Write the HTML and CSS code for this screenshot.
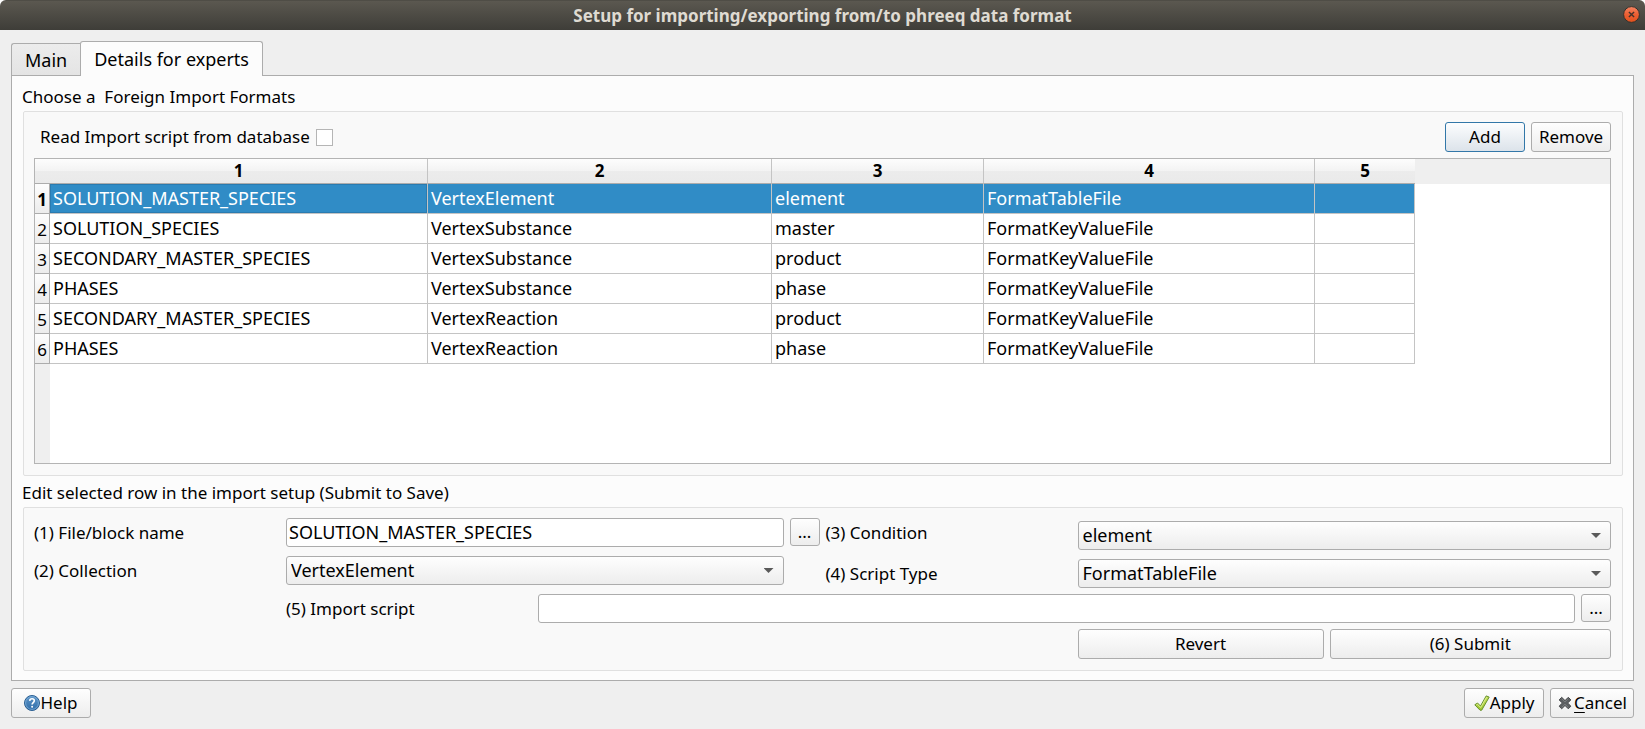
FILE: index.html
```html
<!DOCTYPE html>
<html lang="en">
<head>
<meta charset="utf-8">
<meta name="viewport" content="width=device-width, initial-scale=1">
<title>Setup for importing/exporting from/to phreeq data format</title>
<link rel="stylesheet" href="styles.css">
</head>
<body>
<div class="window">
  <header class="titlebar">
    <h1 class="title">Setup for importing/exporting from/to phreeq data format</h1>
    <button class="close" type="button" aria-label="Close">
      <svg viewBox="0 0 17 17" width="17" height="17" aria-hidden="true">
        <defs><linearGradient id="orange" x1="0" y1="0" x2="0" y2="1"><stop offset="0" stop-color="#f58563"/><stop offset=".5" stop-color="#ec5f33"/><stop offset="1" stop-color="#e2511c"/></linearGradient></defs>
        <circle cx="8.5" cy="8.5" r="7.9" fill="url(#orange)" stroke="#33322d"/>
        <path d="M5.9 5.9l5.2 5.2M11.1 5.9l-5.2 5.2" stroke="#45322a" stroke-width="1.4"/>
      </svg>
    </button>
  </header>

  <main class="content">
    <div class="tabs" role="tablist">
      <button class="tab" type="button" role="tab" aria-selected="false">Main</button>
      <button class="tab tab-active" type="button" role="tab" aria-selected="true">Details for experts</button>
    </div>

    <section class="panel" role="tabpanel">
      <h2 class="group-title">Choose a&nbsp; Foreign Import Formats</h2>
      <div class="group group-formats">
        <div class="toolbar">
          <label class="check">Read Import script from database <input class="checkbox" type="checkbox"></label>
          <button class="button button-default" type="button">Add</button>
          <button class="button" type="button">Remove</button>
        </div>
        <div class="table-view">
          <table class="formats">
            <colgroup><col class="col-index"><col class="col-name"><col class="col-collection"><col class="col-condition"><col class="col-type"><col class="col-script"></colgroup>
            <thead>
              <tr><td class="corner"></td><th scope="col">1</th><th scope="col">2</th><th scope="col">3</th><th scope="col">4</th><th scope="col">5</th></tr>
            </thead>
            <tbody>
              <tr class="selected"><th scope="row">1</th><td>SOLUTION_MASTER_SPECIES</td><td>VertexElement</td><td>element</td><td>FormatTableFile</td><td></td></tr>
              <tr><th scope="row">2</th><td>SOLUTION_SPECIES</td><td>VertexSubstance</td><td>master</td><td>FormatKeyValueFile</td><td></td></tr>
              <tr><th scope="row">3</th><td>SECONDARY_MASTER_SPECIES</td><td>VertexSubstance</td><td>product</td><td>FormatKeyValueFile</td><td></td></tr>
              <tr><th scope="row">4</th><td>PHASES</td><td>VertexSubstance</td><td>phase</td><td>FormatKeyValueFile</td><td></td></tr>
              <tr><th scope="row">5</th><td>SECONDARY_MASTER_SPECIES</td><td>VertexReaction</td><td>product</td><td>FormatKeyValueFile</td><td></td></tr>
              <tr><th scope="row">6</th><td>PHASES</td><td>VertexReaction</td><td>phase</td><td>FormatKeyValueFile</td><td></td></tr>
            </tbody>
          </table>
        </div>
      </div>

      <h2 class="group-title">Edit selected row in the import setup (Submit to Save)</h2>
      <form class="group form">
        <div class="columns">
          <div class="fields">
            <label class="label" for="block">(1) File/block name</label>
            <div class="with-browse">
              <input class="field" id="block" type="text" value="SOLUTION_MASTER_SPECIES">
              <button class="browse" type="button" aria-label="Browse block names">...</button>
            </div>
            <label class="label" for="collection">(2) Collection</label>
            <div class="with-browse">
              <div class="select"><select class="field" id="collection"><option>VertexElement</option><option>VertexSubstance</option><option>VertexReaction</option></select></div>
            </div>
          </div>
          <div class="fields fields-right">
            <label class="label" for="condition">(3) Condition</label>
            <div class="select"><select class="field" id="condition"><option>element</option><option>master</option><option>product</option><option>phase</option></select></div>
            <label class="label" for="type">(4) Script Type</label>
            <div class="select"><select class="field" id="type"><option>FormatTableFile</option><option>FormatKeyValueFile</option></select></div>
          </div>
        </div>
        <div class="fields script-row">
          <label class="label" for="script">(5) Import script</label>
          <div class="with-browse">
            <input class="field" id="script" type="text">
            <button class="browse" type="button" aria-label="Browse scripts">...</button>
          </div>
        </div>
        <div class="columns">
          <div class="fields submit-row">
            <button class="button" type="button">Revert</button>
            <button class="button" type="submit">(6) Submit</button>
          </div>
        </div>
      </form>
    </section>

    <footer class="actions">
      <button class="button help" type="button">
        <svg viewBox="0 0 16 16" width="16" height="16" aria-hidden="true">
          <defs><linearGradient id="blue" x1="0" y1="0" x2="0" y2="1"><stop offset="0" stop-color="#5f97c9"/><stop offset="1" stop-color="#2f6ca8"/></linearGradient></defs>
          <circle cx="8" cy="8" r="7.5" fill="url(#blue)" stroke="#2b5f92"/>
          <circle cx="8" cy="8" r="6.4" fill="none" stroke="#7fb0da" stroke-width=".8"/>
          <path d="M5.700 5.900C5.800 4.400 6.800 3.800 8 3.800c1.400 0 2.300.8 2.300 2 0 1.800-2.200 1.900-2.200 3.700" fill="none" stroke="#fff" stroke-width="1.6"/>
          <circle cx="8.100" cy="11.700" r="1" fill="#fff"/>
        </svg>Help</button>
      <button class="button apply" type="button">
        <svg viewBox="0 0 16 16" width="16" height="16" aria-hidden="true">
          <defs><linearGradient id="green" x1="0" y1="0" x2="0" y2="1"><stop offset="0" stop-color="#c8e25a"/><stop offset="1" stop-color="#9cc52e"/></linearGradient></defs>
          <path d="M.8 9.800L3.500 8l3 3L12.200.9l3 1.200L7.700 15.200H6z" fill="url(#green)" stroke="#67902f" stroke-linejoin="round"/>
          <path d="M2.300 9.900l1.100-.7 3.300 3.300 5.900-10.300" fill="none" stroke="#e4f2a5" stroke-width=".8"/>
        </svg>Apply</button>
      <button class="button cancel" type="button">
        <svg viewBox="0 0 16 16" width="16" height="16" aria-hidden="true">
          <path d="M4.700 2.300L8 5.600l3.300-3.300 2.600 2.600L10.600 8l3.300 3.200-2.600 2.600L8 10.500l-3.300 3.300-2.600-2.600L5.400 8 2.100 4.900z" fill="#5d6062" stroke="#484a4c" stroke-linejoin="round"/>
          <path d="M4.700 3.700l3.300 3.300 3.300-3.300M4.700 12.400L8 9.100l3.300 3.300" fill="none" stroke="#85888a" stroke-width=".7"/>
        </svg><span><u>C</u>ancel</span></button>
    </footer>
  </main>
</div>
</body>
</html>
```
FILE: styles.css
```css
* { box-sizing: border-box; }

body {
  margin: 0;
  background: #fff;
  color: #000;
  font: 17px/24px "Noto Sans", "Open Sans", sans-serif;
}

button, input, select { margin: 0; font: inherit; color: inherit; }

.window {
  display: flex;
  flex-direction: column;
  min-height: 100vh;
  background: #efefef;
  border-radius: 6px 6px 0 0;
  overflow: hidden;
}

.titlebar {
  position: relative;
  display: flex;
  align-items: center;
  justify-content: center;
  height: 30px;
  background: linear-gradient(#5b5850, #3e3d38);
  border-top: 1px solid #4f4d46;
}

.title {
  margin: 0;
  font-size: 17px;
  line-height: 24px;
  font-weight: 700;
  color: #dfdbd2;
}

.close {
  position: absolute;
  right: 5px;
  top: 5px;
  display: flex;
  padding: 0;
  border: 0;
  background: none;
}

.content {
  flex: 1;
  display: flex;
  flex-direction: column;
  padding: 11px;
}

.tabs {
  display: flex;
  align-items: flex-end;
  margin-bottom: -1px;
  z-index: 1;
}

.tab {
  height: 33px;
  padding: 0 13px;
  border: 1px solid #acacac;
  border-right: 0;
  border-radius: 3px 0 0 0;
  background: linear-gradient(#ececec, #e4e4e4);
  font-size: 18px;
}

.tab-active {
  height: 35px;
  border-right: 1px solid #acacac;
  border-bottom: 0;
  border-radius: 3px 3px 0 0;
  background: #fcfcfc;
}

.panel {
  flex: 1;
  display: flex;
  flex-direction: column;
  padding: 9px 10px;
  border: 1px solid #acacac;
  background: #fcfcfc;
}

.group-title {
  margin: 0;
  padding-bottom: 2px;
  font-size: 17px;
  line-height: 24px;
  font-weight: 400;
}

.group {
  margin-left: 1px;
  border: 1px solid #e0e0e0;
  border-radius: 2px;
  background: #f9f9f9;
}

.group-formats {
  flex: 1;
  display: flex;
  flex-direction: column;
  gap: 6px;
  margin-bottom: 5px;
  padding: 10px 11px 11px 10px;
}

.toolbar { display: flex; align-items: center; gap: 6px; }

.check {
  display: flex;
  align-items: center;
  gap: 6px;
  margin-right: auto;
  padding-left: 6px;
}

.checkbox {
  appearance: none;
  width: 17px;
  height: 17px;
  margin: 0;
  border: 1px solid #b5b5b5;
  background: #fff;
}

.button {
  display: flex;
  align-items: center;
  justify-content: center;
  min-width: 80px;
  height: 30px;
  padding: 0 6px;
  border: 1px solid #acacac;
  border-radius: 3px;
  background: linear-gradient(#fefefe, #ededed);
}

.button-default {
  border-color: #3277a8;
  background: linear-gradient(#fcfdfe, #dce3ea);
}

.table-view {
  flex: 1;
  border: 1px solid #b4b4b4;
  overflow: hidden;
  background:
    linear-gradient(#efefef, #efefef) 0 0 / 100% 25px no-repeat,
    linear-gradient(#efefef, #efefef) 0 0 / 15px 100% no-repeat,
    #fff;
}

.formats {
  width: 1380px;
  table-layout: fixed;
  border-collapse: separate;
  border-spacing: 0;
  font-size: 18px;
}

.col-index { width: 15px; }
.col-name { width: 378px; }
.col-collection { width: 344px; }
.col-condition { width: 212px; }
.col-type { width: 331px; }
.col-script { width: 100px; }

.formats th, .formats td {
  height: 30px;
  padding: 0 3px 1px;
  border-right: 1px solid #c4c4c4;
  border-bottom: 1px solid #c4c4c4;
  text-align: left;
  white-space: nowrap;
}

.formats thead th, .formats .corner {
  height: 25px;
  padding: 0;
  border-bottom-color: #acacac;
  text-align: center;
  font-size: 17px;
  background: linear-gradient(#fdfdfd, #f3f3f3 50%, #ececec 50%, #eaeaea);
}

.formats .corner { border-right: 0; }
.formats thead th:last-child { border-right: 0; }

.formats tbody th {
  padding: 2px 0 0;
  border-color: #acacac;
  text-align: center;
  font-size: 17px;
  font-weight: 400;
  background: linear-gradient(#fdfdfd, #ececec);
}

.formats .selected th { font-weight: 700; }
.formats .selected td { background: #308cc6; color: #fff; }
.formats .selected td:nth-child(2) { box-shadow: inset 0 0 0 1px #2a7bb0; }

.form {
  display: flex;
  flex-direction: column;
  gap: 6px;
  padding: 10px 11px 11px 10px;
}

.columns {
  display: grid;
  grid-template-columns: 1fr 1fr;
  gap: 6px;
}

.fields {
  display: grid;
  grid-template-columns: 246px 1fr;
  column-gap: 6px;
  row-gap: 9px;
  align-items: center;
}

.fields-right { padding-top: 3px; }
.fields-right .label:first-child { align-self: start; }
.columns > .fields:first-child { align-self: start; }

.with-browse {
  display: grid;
  grid-template-columns: 1fr 30px;
  gap: 6px;
}

.script-row { margin-left: 252px; }
.columns > .submit-row { grid-column: 2; margin-left: 252px; align-self: start; }

.field {
  display: block;
  width: 100%;
  height: 29px;
  padding: 0 2px 1px;
  border: 1px solid #acacac;
  border-radius: 3px;
  background: #fff;
  font-size: 18px;
}

.select { position: relative; }

.select .field {
  appearance: none;
  padding: 0 24px 1px 4px;
  background: linear-gradient(#fefefe, #ededed);
}

.select::after {
  content: "";
  position: absolute;
  right: 10px;
  top: 12px;
  width: 10px;
  height: 5px;
  background: #5a5a5a;
  clip-path: polygon(0 0, 100% 0, 50% 100%);
  pointer-events: none;
}

.browse {
  height: 28px;
  padding: 0;
  border: 1px solid #acacac;
  border-radius: 3px;
  background: linear-gradient(#fefefe, #ededed);
}

.actions {
  display: flex;
  gap: 6px;
  padding-top: 7px;
}

.help { margin-right: auto; }
.cancel { gap: 1px; }
.cancel u { text-underline-offset: 3px; text-decoration-skip-ink: none; }
```
